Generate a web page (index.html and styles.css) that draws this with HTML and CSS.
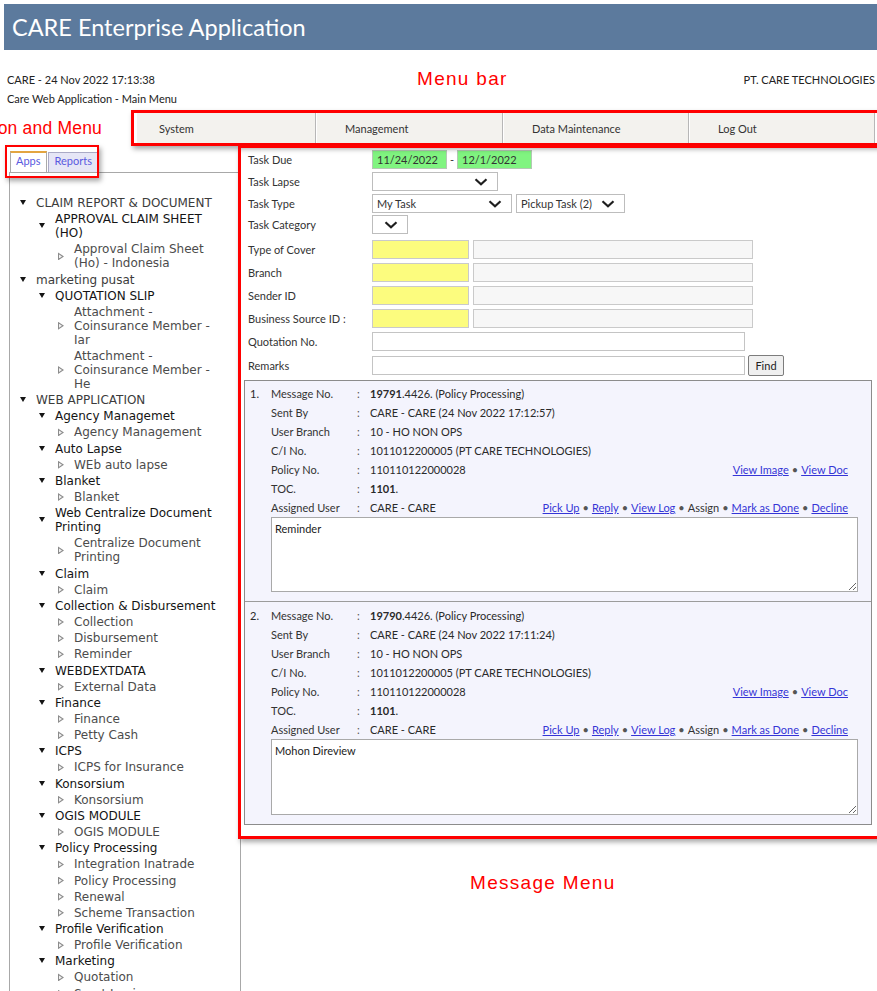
FILE: index.html
```html
<!DOCTYPE html>
<html lang="en">
<head>
<meta charset="utf-8">
<title>CARE Enterprise Application</title>
<link rel="stylesheet" href="styles.css">
</head>
<body>
<div class="page">
  <header class="appbar">CARE Enterprise Application</header>

  <div class="session">
    <div class="session-info">
      <div>CARE - 24 Nov 2022 17:13:38</div>
      <div>Care Web Application - Main Menu</div>
    </div>
    <div class="company">PT. CARE TECHNOLOGIES</div>
  </div>

  <nav class="menubar">
    <div class="menu-item">System</div>
    <div class="menu-item">Management</div>
    <div class="menu-item">Data Maintenance</div>
    <div class="menu-item">Log Out</div>
  </nav>

  <div class="workspace">
    <aside class="sidebar">
      <div class="tabs">
        <span class="tab active">Apps</span>
        <span class="tab">Reports</span>
      </div>
      <div class="tree-panel">
        <ul class="tree">
          <li><div class="row"><i class="tw open"></i><span class="t1">CLAIM REPORT &amp; DOCUMENT</span></div>
            <ul>
              <li><div class="row"><i class="tw open"></i><span class="t2">APPROVAL CLAIM SHEET (HO)</span></div>
                <ul>
                  <li><div class="row"><i class="tw leaf"></i><span class="t3">Approval Claim Sheet (Ho) - Indonesia</span></div></li>
                </ul>
              </li>
            </ul>
          </li>
          <li><div class="row"><i class="tw open"></i><span class="t1">marketing pusat</span></div>
            <ul>
              <li><div class="row"><i class="tw open"></i><span class="t2">QUOTATION SLIP</span></div>
                <ul>
                  <li><div class="row"><i class="tw leaf"></i><span class="t3">Attachment - Coinsurance Member - Iar</span></div></li>
                  <li><div class="row"><i class="tw leaf"></i><span class="t3">Attachment - Coinsurance Member - He</span></div></li>
                </ul>
              </li>
            </ul>
          </li>
          <li><div class="row"><i class="tw open"></i><span class="t1">WEB APPLICATION</span></div>
            <ul>
              <li><div class="row"><i class="tw open"></i><span class="t2">Agency Managemet</span></div>
                <ul><li><div class="row"><i class="tw leaf"></i><span class="t3">Agency Management</span></div></li></ul>
              </li>
              <li><div class="row"><i class="tw open"></i><span class="t2">Auto Lapse</span></div>
                <ul><li><div class="row"><i class="tw leaf"></i><span class="t3">WEb auto lapse</span></div></li></ul>
              </li>
              <li><div class="row"><i class="tw open"></i><span class="t2">Blanket</span></div>
                <ul><li><div class="row"><i class="tw leaf"></i><span class="t3">Blanket</span></div></li></ul>
              </li>
              <li><div class="row"><i class="tw open"></i><span class="t2">Web Centralize Document Printing</span></div>
                <ul><li><div class="row"><i class="tw leaf"></i><span class="t3">Centralize Document Printing</span></div></li></ul>
              </li>
              <li><div class="row"><i class="tw open"></i><span class="t2">Claim</span></div>
                <ul><li><div class="row"><i class="tw leaf"></i><span class="t3">Claim</span></div></li></ul>
              </li>
              <li><div class="row"><i class="tw open"></i><span class="t2">Collection &amp; Disbursement</span></div>
                <ul>
                  <li><div class="row"><i class="tw leaf"></i><span class="t3">Collection</span></div></li>
                  <li><div class="row"><i class="tw leaf"></i><span class="t3">Disbursement</span></div></li>
                  <li><div class="row"><i class="tw leaf"></i><span class="t3">Reminder</span></div></li>
                </ul>
              </li>
              <li><div class="row"><i class="tw open"></i><span class="t2">WEBDEXTDATA</span></div>
                <ul><li><div class="row"><i class="tw leaf"></i><span class="t3">External Data</span></div></li></ul>
              </li>
              <li><div class="row"><i class="tw open"></i><span class="t2">Finance</span></div>
                <ul>
                  <li><div class="row"><i class="tw leaf"></i><span class="t3">Finance</span></div></li>
                  <li><div class="row"><i class="tw leaf"></i><span class="t3">Petty Cash</span></div></li>
                </ul>
              </li>
              <li><div class="row"><i class="tw open"></i><span class="t2">ICPS</span></div>
                <ul><li><div class="row"><i class="tw leaf"></i><span class="t3">ICPS for Insurance</span></div></li></ul>
              </li>
              <li><div class="row"><i class="tw open"></i><span class="t2">Konsorsium</span></div>
                <ul><li><div class="row"><i class="tw leaf"></i><span class="t3">Konsorsium</span></div></li></ul>
              </li>
              <li><div class="row"><i class="tw open"></i><span class="t2">OGIS MODULE</span></div>
                <ul><li><div class="row"><i class="tw leaf"></i><span class="t3">OGIS MODULE</span></div></li></ul>
              </li>
              <li><div class="row"><i class="tw open"></i><span class="t2">Policy Processing</span></div>
                <ul>
                  <li><div class="row"><i class="tw leaf"></i><span class="t3">Integration Inatrade</span></div></li>
                  <li><div class="row"><i class="tw leaf"></i><span class="t3">Policy Processing</span></div></li>
                  <li><div class="row"><i class="tw leaf"></i><span class="t3">Renewal</span></div></li>
                  <li><div class="row"><i class="tw leaf"></i><span class="t3">Scheme Transaction</span></div></li>
                </ul>
              </li>
              <li><div class="row"><i class="tw open"></i><span class="t2">Profile Verification</span></div>
                <ul><li><div class="row"><i class="tw leaf"></i><span class="t3">Profile Verification</span></div></li></ul>
              </li>
              <li><div class="row"><i class="tw open"></i><span class="t2">Marketing</span></div>
                <ul>
                  <li><div class="row"><i class="tw leaf"></i><span class="t3">Quotation</span></div></li>
                  <li><div class="row"><i class="tw leaf"></i><span class="t3">Surat Jaminan</span></div></li>
                </ul>
              </li>
            </ul>
          </li>
        </ul>
      </div>
    </aside>

    <main class="content">
      <form class="filters">
        <div class="frow">
          <span class="flabel">Task Due</span>
          <span class="field date">11/24/2022</span>
          <span class="dash">-</span>
          <span class="field date">12/1/2022</span>
        </div>
        <div class="frow">
          <span class="flabel">Task Lapse</span>
          <span class="field select w-lapse"><span></span><svg class="chev" width="14" height="8" viewBox="0 0 14 8"><path d="M1.5 1.3 L7 6.3 L12.5 1.3" fill="none" stroke="#1e1e1e" stroke-width="2.2"/></svg></span>
        </div>
        <div class="frow">
          <span class="flabel">Task Type</span>
          <span class="field select w-type"><span>My Task</span><svg class="chev" width="14" height="8" viewBox="0 0 14 8"><path d="M1.5 1.3 L7 6.3 L12.5 1.3" fill="none" stroke="#1e1e1e" stroke-width="2.2"/></svg></span>
          <span class="field select w-pick"><span>Pickup Task (2)</span><svg class="chev" width="14" height="8" viewBox="0 0 14 8"><path d="M1.5 1.3 L7 6.3 L12.5 1.3" fill="none" stroke="#1e1e1e" stroke-width="2.2"/></svg></span>
        </div>
        <div class="frow">
          <span class="flabel">Task Category</span>
          <span class="field select w-cat"><svg class="chev" width="14" height="8" viewBox="0 0 14 8"><path d="M1.5 1.3 L7 6.3 L12.5 1.3" fill="none" stroke="#1e1e1e" stroke-width="2.2"/></svg></span>
        </div>

        <div class="frow group">
          <span class="flabel">Type of Cover</span>
          <span class="field code"></span><span class="field desc"></span>
        </div>
        <div class="frow group">
          <span class="flabel">Branch</span>
          <span class="field code"></span><span class="field desc"></span>
        </div>
        <div class="frow group">
          <span class="flabel">Sender ID</span>
          <span class="field code"></span><span class="field desc"></span>
        </div>
        <div class="frow group">
          <span class="flabel">Business Source ID :</span>
          <span class="field code"></span><span class="field desc"></span>
        </div>
        <div class="frow group">
          <span class="flabel">Quotation No.</span>
          <span class="field wide"></span>
        </div>
        <div class="frow group last">
          <span class="flabel">Remarks</span>
          <span class="field wide"></span>
          <button type="button" class="btn">Find</button>
        </div>
      </form>

      <div class="messages">
        <div class="msg">
          <div class="mrow"><span class="num">1.</span><span class="lbl">Message No.</span><span class="colon">:</span><span class="val"><b>19791</b>.4426. (Policy Processing)</span></div>
          <div class="mrow"><span class="num"></span><span class="lbl">Sent By</span><span class="colon">:</span><span class="val">CARE - CARE (24 Nov 2022 17:12:57)</span></div>
          <div class="mrow"><span class="num"></span><span class="lbl">User Branch</span><span class="colon">:</span><span class="val">10 - HO NON OPS</span></div>
          <div class="mrow"><span class="num"></span><span class="lbl">C/I No.</span><span class="colon">:</span><span class="val">1011012200005 (PT CARE TECHNOLOGIES)</span></div>
          <div class="mrow"><span class="num"></span><span class="lbl">Policy No.</span><span class="colon">:</span><span class="val">110110122000028</span><span class="acts"><a href="#">View Image</a><i class="sep">•</i><a href="#">View Doc</a></span></div>
          <div class="mrow"><span class="num"></span><span class="lbl">TOC.</span><span class="colon">:</span><span class="val"><b>1101</b>.</span></div>
          <div class="mrow"><span class="num"></span><span class="lbl">Assigned User</span><span class="colon">:</span><span class="val">CARE - CARE</span><span class="acts"><a href="#">Pick Up</a><i class="sep">•</i><a href="#">Reply</a><i class="sep">•</i><a href="#">View Log</a><i class="sep">•</i>Assign<i class="sep">•</i><a href="#">Mark as Done</a><i class="sep">•</i><a href="#">Decline</a></span></div>
          <textarea class="note" readonly>Reminder</textarea>
        </div>
        <div class="msg">
          <div class="mrow"><span class="num">2.</span><span class="lbl">Message No.</span><span class="colon">:</span><span class="val"><b>19790</b>.4426. (Policy Processing)</span></div>
          <div class="mrow"><span class="num"></span><span class="lbl">Sent By</span><span class="colon">:</span><span class="val">CARE - CARE (24 Nov 2022 17:11:24)</span></div>
          <div class="mrow"><span class="num"></span><span class="lbl">User Branch</span><span class="colon">:</span><span class="val">10 - HO NON OPS</span></div>
          <div class="mrow"><span class="num"></span><span class="lbl">C/I No.</span><span class="colon">:</span><span class="val">1011012200005 (PT CARE TECHNOLOGIES)</span></div>
          <div class="mrow"><span class="num"></span><span class="lbl">Policy No.</span><span class="colon">:</span><span class="val">110110122000028</span><span class="acts"><a href="#">View Image</a><i class="sep">•</i><a href="#">View Doc</a></span></div>
          <div class="mrow"><span class="num"></span><span class="lbl">TOC.</span><span class="colon">:</span><span class="val"><b>1101</b>.</span></div>
          <div class="mrow"><span class="num"></span><span class="lbl">Assigned User</span><span class="colon">:</span><span class="val">CARE - CARE</span><span class="acts"><a href="#">Pick Up</a><i class="sep">•</i><a href="#">Reply</a><i class="sep">•</i><a href="#">View Log</a><i class="sep">•</i>Assign<i class="sep">•</i><a href="#">Mark as Done</a><i class="sep">•</i><a href="#">Decline</a></span></div>
          <textarea class="note" readonly>Mohon Direview</textarea>
        </div>
      </div>
    </main>
  </div>

  <!-- callouts drawn over the page -->
  <div class="callout-box cb-menu"></div>
  <div class="callout-box cb-tabs"></div>
  <div class="callout-box cb-msgs"></div>
  <div class="callout-label cl-menu">Menu bar</div>
  <div class="callout-label cl-nav">Navigation and Menu</div>
  <div class="callout-label cl-msgs">Message Menu</div>
</div>
</body>
</html>
```
FILE: styles.css
```css
* { box-sizing: border-box; }

html, body {
  margin: 0;
  background: #fff;
}

body {
  font-family: Lato, "Open Sans", sans-serif;
  font-size: 11px;
  color: #222;
}

.page {
  position: relative;
  width: 877px;
  height: 991px;
  overflow: hidden;
}

/* ---------- title bar ---------- */
.appbar {
  margin: 4px 0 0 4px;
  height: 46px;
  padding-left: 8px;
  background: #5c7a9d;
  color: #fff;
  font-size: 23.5px;
  line-height: 46px;
}

/* ---------- session line ---------- */
.session {
  display: flex;
  justify-content: space-between;
  height: 58px;
  padding: 20px 2px 0 7px;
  line-height: 19px;
  color: #222;
}

/* ---------- main menu ---------- */
.menubar {
  display: grid;
  grid-template-columns: 180px 187px 186px 186px;
  height: 30px;
  margin: 5px 0 0 136px;
}

.menu-item {
  background: #f3f2ee;
  border-left: 1px solid #fff;
  border-right: 1px solid #b7b7b7;
  border-bottom: 1px solid #d6d6d6;
  padding-left: 28px;
  line-height: 31px;
  color: #333;
}

.menu-item:first-child { padding-left: 22px; }

/* ---------- workspace ---------- */
.workspace {
  display: flex;
  margin-top: 4px;
}

.sidebar {
  flex: none;
  display: flex;
  flex-direction: column;
  width: 232px;
  height: 844px;
  margin-left: 9px;
}

.tabs {
  display: flex;
  align-items: flex-end;
  gap: 1px;
  height: 25px;
  padding-left: 1px;
}

.tab {
  height: 20px;
  padding: 0 6px;
  border: 1px solid #aaaac6;
  border-bottom: 0;
  background: #e6e6f6;
  color: #5a5ae0;
  line-height: 16px;
}

.tab.active {
  height: 21px;
  padding: 0 5px;
  background: #fff;
  border-top: 2px solid #e3a540;
  border-color: #e3a540 #aaa #aaa #aaa;
  line-height: 16px;
}

.tree-panel {
  flex: 1;
  overflow: hidden;
  border: 1px solid #a8a8a8;
  border-bottom: 0;
  padding: 22px 14px 0 10px;
}

/* ---------- menu tree ---------- */
.tree, .tree ul {
  list-style: none;
  margin: 0;
  padding: 0;
}

.tree ul { padding-left: 19px; }

.tree {
  font-family: "DejaVu Sans", Verdana, sans-serif;
  font-size: 12px;
}

.row {
  display: flex;
  align-items: center;
  padding: 1.08px 0;
  line-height: 14px;
}

.tw {
  flex: none;
  position: relative;
  width: 16px;
  height: 8px;
}

.tw.open::before {
  content: "";
  position: absolute;
  left: 0;
  top: 1px;
  border-left: 3.5px solid transparent;
  border-right: 3.5px solid transparent;
  border-top: 5px solid #151515;
}

.tw.leaf::before,
.tw.leaf::after {
  content: "";
  position: absolute;
  clip-path: polygon(0 0, 100% 50%, 0 100%);
}

.tw.leaf::before {
  left: 0;
  top: 0;
  width: 6px;
  height: 8px;
  background: #8c8c8c;
}

.tw.leaf::after {
  left: 1px;
  top: 2px;
  width: 3px;
  height: 4px;
  background: #f2f2f2;
}

.t1 { color: #3c3c3c; }
.t2 { color: #141414; }
.t3 { color: #4c4c4c; }

/* ---------- task filters ---------- */
.content {
  flex: 1;
  margin-left: 3px;
  padding-top: 3px;
}

.filters {
  margin: 0;
  padding-left: 4px;
}

.frow {
  display: flex;
  align-items: center;
  height: 19px;
  margin-bottom: 3px;
}

.frow.group { margin-bottom: 4px; }
.frow:nth-child(3) { margin-bottom: 2px; }
.frow:nth-child(4) { margin-bottom: 6px; }
.frow.last { height: 21px; margin-bottom: 0; }

.flabel {
  flex: none;
  width: 124px;
  color: #333;
}

.field {
  display: inline-flex;
  align-items: center;
  height: 19px;
  padding: 0 4px;
  border: 1px solid #c4c4c4;
  background: #fff;
  color: #333;
}

.field.date {
  width: 75px;
  background: #80f480;
  border-color: #b4c8b4;
}

.dash {
  width: 10px;
  text-align: center;
  color: #333;
}

.select {
  justify-content: space-between;
  padding: 0 9px 0 4px;
  border-color: #bdbdbd;
}

.w-lapse { width: 126px; }
.w-type  { width: 140px; }
.w-pick  { width: 109px; margin-left: 4px; }
.w-cat   { width: 36px; padding-left: 11px; }

.field.code {
  width: 97px;
  background: #fcfc7e;
  border-color: #cacaca;
}

.field.desc {
  width: 280px;
  margin-left: 4px;
  background: #f7f7f7;
  border-color: #cacaca;
}

.field.wide { width: 373px; }

.btn {
  width: 36px;
  height: 21px;
  margin-left: 3px;
  padding: 0;
  border: 1px solid #7c7c7c;
  border-radius: 2px;
  background: #efefef;
  font: 11px Lato, "Open Sans", sans-serif;
  color: #222;
}

/* ---------- message list ---------- */
.messages {
  width: 628px;
  margin-top: 4px;
  border: 1px solid #8c8c8c;
  background: #f4f4fd;
}

.msg { padding: 3px 13px 9px 5px; }
.msg + .msg {
  padding-top: 4px;
  border-top: 1px solid #9c9c9c;
}

.mrow {
  display: flex;
  align-items: center;
  height: 19px;
  color: #2a2a2a;
}

.num   { flex: none; width: 21px; }
.lbl   { flex: none; width: 86px; color: #333; }
.colon { flex: none; width: 13px; color: #555; }
.val   { flex: 1; }

.acts {
  margin-right: 10px;
  color: #333;
}

.acts a {
  color: #3535d6;
  text-decoration: underline;
}

.sep {
  font-style: normal;
  color: #555;
  margin: 0 3px;
}

.note {
  display: block;
  width: 587px;
  height: 75px;
  margin-left: 21px;
  padding: 4px 3px;
  border: 1px solid #a9a9a9;
  background: #fff;
  font: 11px/14px Lato, "Open Sans", sans-serif;
  color: #222;
  resize: both;
}

.msg + .msg .note { height: 76px; }

/* ---------- red callouts ---------- */
.callout-box {
  position: absolute;
  border: 3px solid #f00;
  box-shadow: 2px 3px 5px rgba(0, 0, 0, 0.35);
  pointer-events: none;
}

.cb-menu { left: 131px; top: 110px; width: 760px; height: 36px; }
.cb-tabs { left: 5px; top: 145px; width: 94px; height: 33px; border-width: 2px; }
.cb-msgs { left: 238px; top: 145px; width: 660px; height: 694px; }

.callout-label {
  position: absolute;
  color: #f00;
  font-family: "Liberation Sans", Arial, sans-serif;
  font-size: 19px;
  line-height: 22px;
  letter-spacing: 1.3px;
  white-space: nowrap;
}

.cl-menu { left: 417px; top: 68px; }
.cl-nav  { right: 775px; top: 117px; font-size: 17.5px; letter-spacing: 0.2px; }
.cl-msgs { left: 470px; top: 872px; }
```
